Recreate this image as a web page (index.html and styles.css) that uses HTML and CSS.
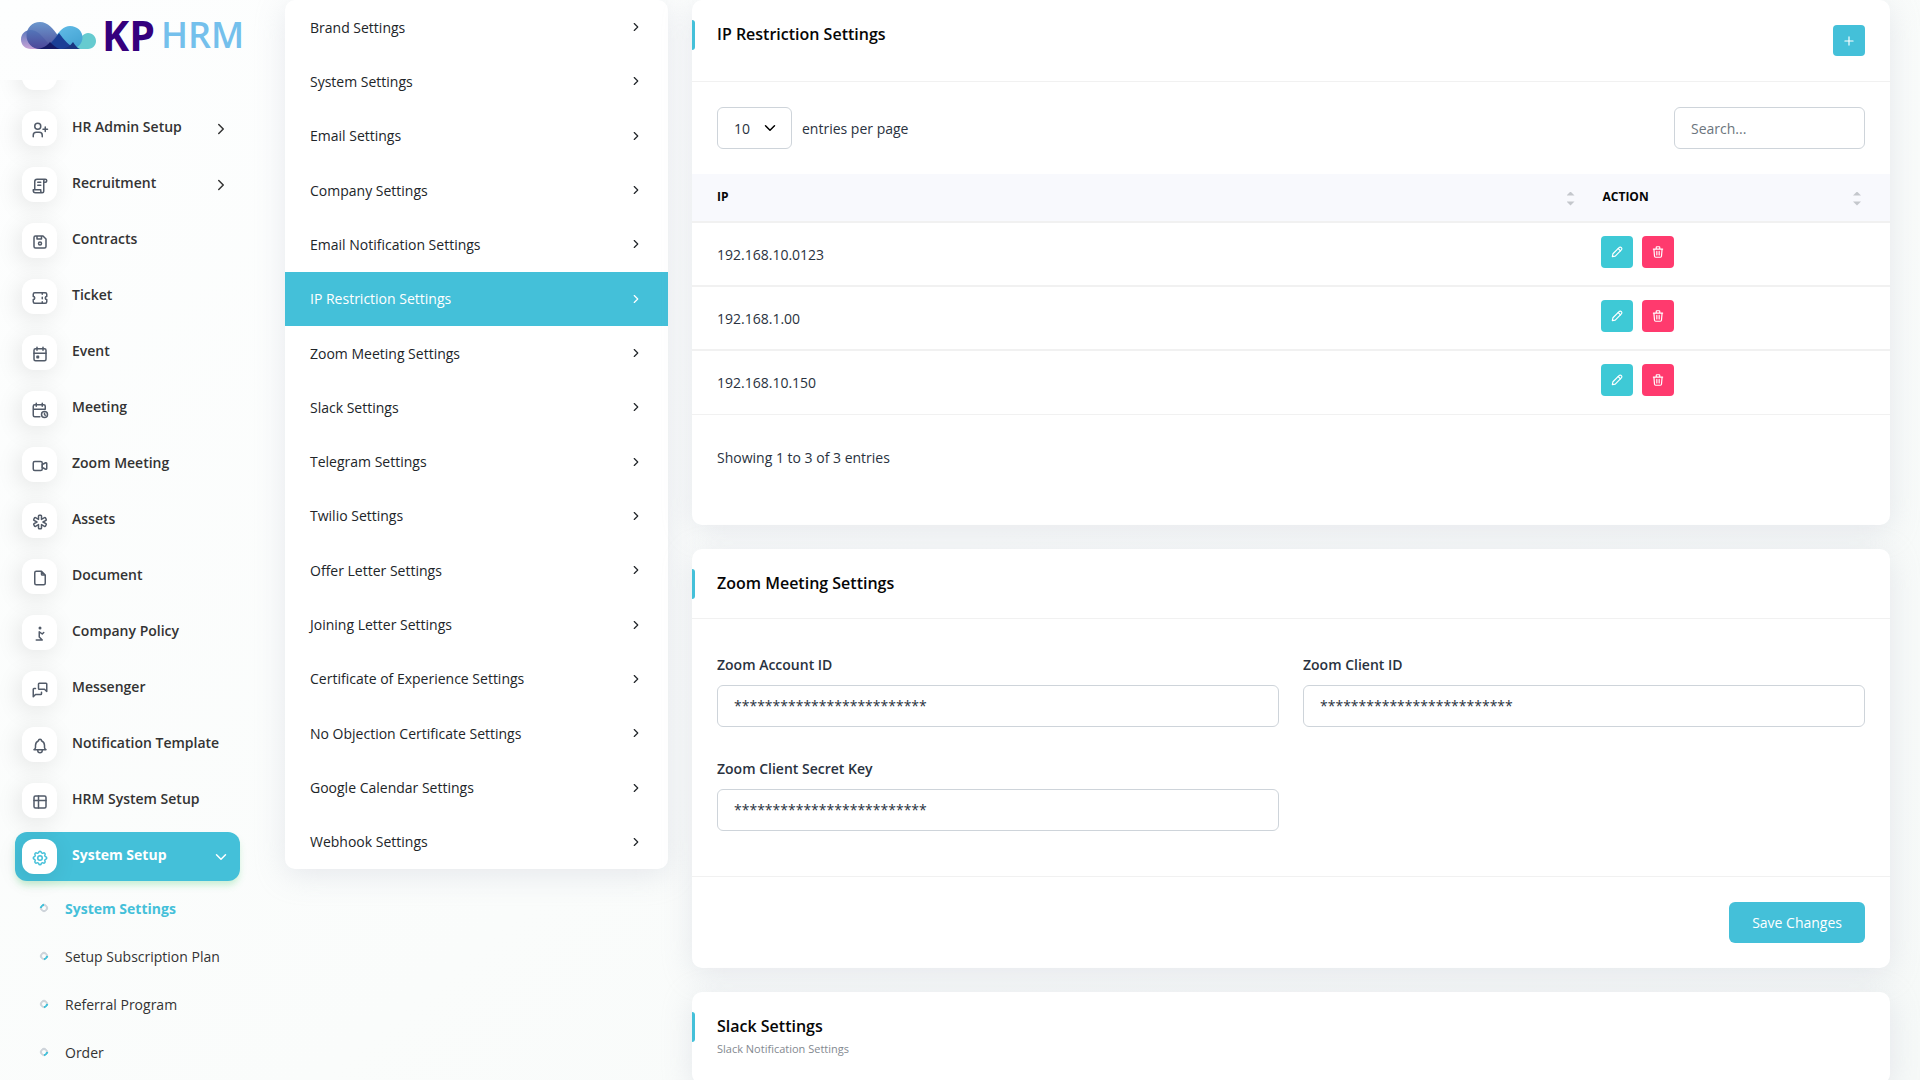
FILE: index.html
```html
<!DOCTYPE html>
<html lang="en">
<head>
    <meta charset="UTF-8">
    <meta name="viewport" content="width=device-width, initial-scale=1.0">
    <title>KP HRM - System Settings</title>
    <link rel="stylesheet" href="styles.css">
</head>
<body>

<!-- shared icons -->
<svg class="sprite" aria-hidden="true">
    <symbol id="i-right" viewBox="0 0 24 24"><path d="M9 6l6 6l-6 6"/></symbol>
    <symbol id="i-down" viewBox="0 0 24 24"><path d="M6 9l6 6l6 -6"/></symbol>
    <symbol id="i-pencil" viewBox="0 0 24 24"><path d="M4 20l1 -5l10.500 -10.500a2.800 2.800 0 0 1 4 4l-10.500 10.500z"/><path d="M14 6l4 4"/></symbol>
    <symbol id="i-trash" viewBox="0 0 24 24"><path d="M4 7h16M10 11v6M14 11v6M5 7l1 12a2 2 0 0 0 2 2h8a2 2 0 0 0 2 -2l1 -12M9 7v-3a1 1 0 0 1 1 -1h4a1 1 0 0 1 1 1v3"/></symbol>
</svg>

<div class="layout">
    <aside class="sidebar">
        <a href="#" class="logo">
            <svg class="logo-mark" viewBox="0 0 75 27" aria-hidden="true">
                <defs>
                    <linearGradient id="g1" x1="0" y1="0" x2="0" y2="1"><stop offset="0" stop-color="#5b8cc8"/><stop offset="1" stop-color="#3f3d92"/></linearGradient>
                    <linearGradient id="g2" x1="0" y1="0" x2="1" y2="1"><stop offset="0" stop-color="#6cc4ee"/><stop offset="1" stop-color="#3f9fcf"/></linearGradient>
                    <linearGradient id="g3" x1="0" y1="0" x2="0" y2="1"><stop offset="0" stop-color="#5a78bd"/><stop offset="1" stop-color="#c9a3d6"/></linearGradient>
                </defs>
                <path fill="url(#g3)" d="M10 8c-6 0-10 4-10 9.500s4 9.500 10 9.500h24c-8-4-14-19-24-19z"/>
                <path fill="#66cbd0" d="M67 11c-8 0-12 16-22 16h22c5 0 8-4 8-8s-3-8-8-8z"/>
                <path fill="url(#g2)" d="M49 4c-13 0-17 23-32 23h32c7 0 12.500-5 12.500-11.500S56 4 49 4z"/>
                <path fill="url(#g1)" fill-opacity=".9" d="M19 0c-8 0-13.500 6-13.500 13.500S11 27 19 27h36c-16 0-20-27-36-27z"/>
                <path fill="#1b3f96" d="M38 11c-5 7-9 13-18 16h36c-8-3-13-9-18-16z"/>
                <path fill="#141a66" d="M29 20c-3 4-8 7-14 7h24c-4-1-7-4-10-7z"/>
                <path fill="#1a3580" d="M52 20c-3 4-6 6-11 7h18c-3-1-5-4-7-7z"/>
            </svg>
            <span class="logo-kp">KP</span>
            <span class="logo-hrm">HRM</span>
        </a>
        <nav class="nav">
            <ul class="nav-list">
                <li><a href="#" class="nav-link" aria-label="Payroll"><span class="nav-icon"></span></a></li>
                <li><a href="#" class="nav-link">
                    <span class="nav-icon"><svg class="icon" viewBox="0 0 24 24"><circle cx="9" cy="7" r="4"/><path d="M3 21v-2a4 4 0 0 1 4 -4h4a4 4 0 0 1 4 4v2M16 11h6m-3 -3v6"/></svg></span>
                    <span class="nav-text">HR Admin Setup</span>
                    <svg class="icon nav-arrow"><use href="#i-right"/></svg>
                </a></li>
                <li><a href="#" class="nav-link">
                    <span class="nav-icon"><svg class="icon" viewBox="0 0 24 24"><path d="M15 21h-9a3 3 0 0 1 -3 -3v-1h10v2a2 2 0 0 0 4 0v-14a2 2 0 1 1 2 2h-2m2 -4h-11a3 3 0 0 0 -3 3v11M9 7h4M9 11h4"/></svg></span>
                    <span class="nav-text">Recruitment</span>
                    <svg class="icon nav-arrow"><use href="#i-right"/></svg>
                </a></li>
                <li><a href="#" class="nav-link">
                    <span class="nav-icon"><svg class="icon" viewBox="0 0 24 24"><path d="M6 4h10l4 4v10a2 2 0 0 1 -2 2h-12a2 2 0 0 1 -2 -2v-12a2 2 0 0 1 2 -2M14 4v4h-6v-4"/><circle cx="12" cy="14" r="2"/></svg></span>
                    <span class="nav-text">Contracts</span>
                </a></li>
                <li><a href="#" class="nav-link">
                    <span class="nav-icon"><svg class="icon" viewBox="0 0 24 24"><path d="M15 5v2M15 11v2M15 17v2M5 5h14a2 2 0 0 1 2 2v3a2 2 0 0 0 0 4v3a2 2 0 0 1 -2 2h-14a2 2 0 0 1 -2 -2v-3a2 2 0 0 0 0 -4v-3a2 2 0 0 1 2 -2"/></svg></span>
                    <span class="nav-text">Ticket</span>
                </a></li>
                <li><a href="#" class="nav-link">
                    <span class="nav-icon"><svg class="icon" viewBox="0 0 24 24"><rect x="4" y="5" width="16" height="16" rx="2"/><path d="M16 3v4M8 3v4M4 11h16M8 15h2v2h-2z"/></svg></span>
                    <span class="nav-text">Event</span>
                </a></li>
                <li><a href="#" class="nav-link">
                    <span class="nav-icon"><svg class="icon" viewBox="0 0 24 24"><path d="M11.795 21h-6.795a2 2 0 0 1 -2 -2v-12a2 2 0 0 1 2 -2h12a2 2 0 0 1 2 2v4M15 3v4M7 3v4M3 11h16M18 16.496v1.504l1 1"/><circle cx="18" cy="18" r="4"/></svg></span>
                    <span class="nav-text">Meeting</span>
                </a></li>
                <li><a href="#" class="nav-link">
                    <span class="nav-icon"><svg class="icon" viewBox="0 0 24 24"><path d="M15 10l4.553 -2.276a1 1 0 0 1 1.447 .894v6.764a1 1 0 0 1 -1.447 .894l-4.553 -2.276v-4z"/><rect x="3" y="6" width="12" height="12" rx="2"/></svg></span>
                    <span class="nav-text">Zoom Meeting</span>
                </a></li>
                <li><a href="#" class="nav-link">
                    <span class="nav-icon"><svg class="icon" viewBox="0 0 24 24"><path d="M13 3a1 1 0 0 1 1 1v4.535l3.928 -2.267a1 1 0 0 1 1.366 .366l1 1.732a1 1 0 0 1 -.366 1.366l-3.927 2.268l3.927 2.269a1 1 0 0 1 .366 1.366l-1 1.732a1 1 0 0 1 -1.366 .366l-3.928 -2.269v4.536a1 1 0 0 1 -1 1h-2a1 1 0 0 1 -1 -1v-4.536l-3.928 2.268a1 1 0 0 1 -1.366 -.366l-1 -1.732a1 1 0 0 1 .366 -1.366l3.927 -2.267l-3.927 -2.268a1 1 0 0 1 -.366 -1.366l1 -1.732a1 1 0 0 1 1.366 -.366l3.928 2.267v-4.535a1 1 0 0 1 1 -1h2z"/></svg></span>
                    <span class="nav-text">Assets</span>
                </a></li>
                <li><a href="#" class="nav-link">
                    <span class="nav-icon"><svg class="icon" viewBox="0 0 24 24"><path d="M14 3v4a1 1 0 0 0 1 1h4M17 21h-10a2 2 0 0 1 -2 -2v-14a2 2 0 0 1 2 -2h7l5 5v11a2 2 0 0 1 -2 2z"/></svg></span>
                    <span class="nav-text">Document</span>
                </a></li>
                <li><a href="#" class="nav-link">
                    <span class="nav-icon"><svg class="icon" viewBox="0 0 24 24"><circle cx="12" cy="4" r="1"/><path d="M7 20h8l-4 -4v-7l4 3l2 -2"/></svg></span>
                    <span class="nav-text">Company Policy</span>
                </a></li>
                <li><a href="#" class="nav-link">
                    <span class="nav-icon"><svg class="icon" viewBox="0 0 24 24"><path d="M21 14l-3 -3h-7a1 1 0 0 1 -1 -1v-6a1 1 0 0 1 1 -1h9a1 1 0 0 1 1 1v10M14 15v2a1 1 0 0 1 -1 1h-7l-3 3v-10a1 1 0 0 1 1 -1h2"/></svg></span>
                    <span class="nav-text">Messenger</span>
                </a></li>
                <li><a href="#" class="nav-link">
                    <span class="nav-icon"><svg class="icon" viewBox="0 0 24 24"><path d="M10 5a2 2 0 0 1 4 0a7 7 0 0 1 4 6v3a4 4 0 0 0 2 3h-16a4 4 0 0 0 2 -3v-3a7 7 0 0 1 4 -6M9 17v1a3 3 0 0 0 6 0v-1"/></svg></span>
                    <span class="nav-text">Notification Template</span>
                </a></li>
                <li><a href="#" class="nav-link">
                    <span class="nav-icon"><svg class="icon" viewBox="0 0 24 24"><rect x="4" y="4" width="16" height="16" rx="2"/><path d="M4 10h16M10 4v16"/></svg></span>
                    <span class="nav-text">HRM System Setup</span>
                </a></li>
                <li>
                    <a href="#" class="nav-link active">
                        <span class="nav-icon"><svg class="icon" viewBox="0 0 24 24"><path d="M10.325 4.317c.426 -1.756 2.924 -1.756 3.350 0a1.724 1.724 0 0 0 2.573 1.066c1.543 -.94 3.310 .826 2.370 2.370a1.724 1.724 0 0 0 1.065 2.572c1.756 .426 1.756 2.924 0 3.350a1.724 1.724 0 0 0 -1.066 2.573c.94 1.543 -.826 3.310 -2.370 2.370a1.724 1.724 0 0 0 -2.572 1.065c-.426 1.756 -2.924 1.756 -3.350 0a1.724 1.724 0 0 0 -2.573 -1.066c-1.543 .94 -3.310 -.826 -2.370 -2.370a1.724 1.724 0 0 0 -1.065 -2.572c-1.756 -.426 -1.756 -2.924 0 -3.350a1.724 1.724 0 0 0 1.066 -2.573c-.94 -1.543 .826 -3.310 2.370 -2.370c1 .608 2.296 .070 2.572 -1.065z"/><circle cx="12" cy="12" r="3"/></svg></span>
                        <span class="nav-text">System Setup</span>
                        <svg class="icon nav-arrow"><use href="#i-down"/></svg>
                    </a>
                    <ul class="submenu">
                        <li class="active"><a href="#">System Settings</a></li>
                        <li><a href="#">Setup Subscription Plan</a></li>
                        <li><a href="#">Referral Program</a></li>
                        <li><a href="#">Order</a></li>
                    </ul>
                </li>
            </ul>
        </nav>
    </aside>

    <main class="main">
        <nav class="settings-nav">
            <a href="#">Brand Settings<svg class="icon"><use href="#i-right"/></svg></a>
            <a href="#">System Settings<svg class="icon"><use href="#i-right"/></svg></a>
            <a href="#">Email Settings<svg class="icon"><use href="#i-right"/></svg></a>
            <a href="#">Company Settings<svg class="icon"><use href="#i-right"/></svg></a>
            <a href="#">Email Notification Settings<svg class="icon"><use href="#i-right"/></svg></a>
            <a href="#" class="active">IP Restriction Settings<svg class="icon"><use href="#i-right"/></svg></a>
            <a href="#">Zoom Meeting Settings<svg class="icon"><use href="#i-right"/></svg></a>
            <a href="#">Slack Settings<svg class="icon"><use href="#i-right"/></svg></a>
            <a href="#">Telegram Settings<svg class="icon"><use href="#i-right"/></svg></a>
            <a href="#">Twilio Settings<svg class="icon"><use href="#i-right"/></svg></a>
            <a href="#">Offer Letter Settings<svg class="icon"><use href="#i-right"/></svg></a>
            <a href="#">Joining Letter Settings<svg class="icon"><use href="#i-right"/></svg></a>
            <a href="#">Certificate of Experience Settings<svg class="icon"><use href="#i-right"/></svg></a>
            <a href="#">No Objection Certificate Settings<svg class="icon"><use href="#i-right"/></svg></a>
            <a href="#">Google Calendar Settings<svg class="icon"><use href="#i-right"/></svg></a>
            <a href="#">Webhook Settings<svg class="icon"><use href="#i-right"/></svg></a>
        </nav>

        <div class="cards">
            <section class="card">
                <div class="card-header">
                    <h2>IP Restriction Settings</h2>
                    <button type="button" class="btn-icon btn-primary" aria-label="Create"><svg class="icon" viewBox="0 0 24 24"><path d="M12 5v14M5 12h14"/></svg></button>
                </div>
                <div class="table-top">
                    <div class="entries">
                        <select id="entries">
                            <option>5</option>
                            <option selected>10</option>
                            <option>15</option>
                        </select>
                        <label for="entries">entries per page</label>
                    </div>
                    <input type="search" class="search" placeholder="Search..." aria-label="Search">
                </div>
                <table class="ip-table">
                    <thead>
                        <tr>
                            <th><button type="button" class="sorter">IP</button></th>
                            <th><button type="button" class="sorter">ACTION</button></th>
                        </tr>
                    </thead>
                    <tbody>
                        <tr>
                            <td>192.168.10.0123</td>
                            <td><div class="actions">
                                <button type="button" class="btn-icon btn-info" aria-label="Edit"><svg class="icon"><use href="#i-pencil"/></svg></button>
                                <button type="button" class="btn-icon btn-danger" aria-label="Delete"><svg class="icon"><use href="#i-trash"/></svg></button>
                            </div></td>
                        </tr>
                        <tr>
                            <td>192.168.1.00</td>
                            <td><div class="actions">
                                <button type="button" class="btn-icon btn-info" aria-label="Edit"><svg class="icon"><use href="#i-pencil"/></svg></button>
                                <button type="button" class="btn-icon btn-danger" aria-label="Delete"><svg class="icon"><use href="#i-trash"/></svg></button>
                            </div></td>
                        </tr>
                        <tr>
                            <td>192.168.10.150</td>
                            <td><div class="actions">
                                <button type="button" class="btn-icon btn-info" aria-label="Edit"><svg class="icon"><use href="#i-pencil"/></svg></button>
                                <button type="button" class="btn-icon btn-danger" aria-label="Delete"><svg class="icon"><use href="#i-trash"/></svg></button>
                            </div></td>
                        </tr>
                    </tbody>
                </table>
                <p class="table-info">Showing 1 to 3 of 3 entries</p>
            </section>

            <section class="card">
                <div class="card-header">
                    <h2>Zoom Meeting Settings</h2>
                </div>
                <form action="#" method="post">
                    <div class="form-body">
                        <div class="form-group">
                            <label for="zoom-account">Zoom Account ID</label>
                            <input type="text" id="zoom-account" value="*************************">
                        </div>
                        <div class="form-group">
                            <label for="zoom-client">Zoom Client ID</label>
                            <input type="text" id="zoom-client" value="*************************">
                        </div>
                        <div class="form-group">
                            <label for="zoom-secret">Zoom Client Secret Key</label>
                            <input type="text" id="zoom-secret" value="*************************">
                        </div>
                    </div>
                    <div class="card-footer">
                        <button type="submit" class="btn-save btn-primary">Save Changes</button>
                    </div>
                </form>
            </section>

            <section class="card">
                <div class="card-header">
                    <div>
                        <h2>Slack Settings</h2>
                        <small>Slack Notification Settings</small>
                    </div>
                </div>
            </section>
        </div>
    </main>
</div>

</body>
</html>
```

FILE: styles.css
```css
*,
*::before,
*::after {
    box-sizing: border-box;
}
body {
    margin: 0;
    font-family: "Open Sans", "Noto Sans", sans-serif;
    font-size: 14px;
    line-height: 21px;
    color: #293240;
    background: linear-gradient(140deg, #fdfefe 0%, #fafcfb 50%, #f6f9f8 100%);
}
a {
    color: inherit;
    text-decoration: none;
}
ul {
    list-style: none;
    margin: 0;
    padding: 0;
}
button, input, select {
    font: inherit;
    color: inherit;
}
button {
    border: none;
    cursor: pointer;
}
.sprite {
    display: none;
}
.icon {
    width: 18px;
    height: 18px;
    fill: none;
    stroke: currentColor;
    stroke-width: 2;
    stroke-linecap: round;
    stroke-linejoin: round;
    flex-shrink: 0;
}
.layout {
    display: flex;
    height: 100vh;
    overflow: hidden;
}

/* sidebar */
.sidebar {
    display: flex;
    flex-direction: column;
    flex: 0 0 285px;
    height: 100%;
}
.logo {
    display: flex;
    align-items: flex-end;
    height: 80px;
    padding: 0 0 31px 21px;
    line-height: 28px;
}
.logo-mark {
    width: 75px;
    height: 27px;
}
.logo-kp {
    margin-left: 6px;
    font-size: 41px;
    font-weight: 700;
    color: #35007d;
}
.logo-hrm {
    margin-left: 6px;
    font-size: 36px;
    font-weight: 600;
    color: #74c0ec;
}
.nav {
    flex: 1;
    overflow: hidden;
}
.nav-list {
    margin-top: -32px;
    padding: 0 45px 0 15px;
}
.nav-link {
    display: flex;
    align-items: center;
    height: 49px;
    margin-bottom: 7px;
    padding: 0 10px 0 7px;
    border-radius: 12px;
    font-weight: 600;
    color: #333;
}
.nav-icon {
    display: flex;
    align-items: center;
    justify-content: center;
    width: 35px;
    height: 35px;
    padding-top: 2px;
    margin-right: 15px;
    border-radius: 12px;
    background: #fff;
    color: #525b69;
    box-shadow: -3px 4px 23px rgba(0, 0, 0, 0.1);
}
.nav-text {
    flex: 1;
    padding-bottom: 5px;
}
.nav-link.active {
    background: #44c0d9;
    color: #fff;
    font-weight: 700;
    box-shadow: 0 5px 7px -1px rgba(81, 210, 120, 0.3);
}
.nav-link.active .nav-icon {
    color: #44c0d9;
}
.submenu {
    margin-top: -4px;
}
.submenu a {
    display: flex;
    align-items: center;
    height: 48px;
    padding-left: 25px;
    color: #333;
}
.submenu a::before {
    content: "";
    width: 8px;
    height: 8px;
    margin-right: 17px;
    border: 2px solid #ced4da;
    border-right-color: #44c0d9;
    border-radius: 50%;
    transform: rotate(45deg);
}
.submenu .active a {
    color: #44c0d9;
    font-weight: 700;
}
.submenu .active a::before {
    transform: rotate(-135deg);
}

/* page content */
.main {
    flex: 1;
    display: flex;
    align-items: flex-start;
    gap: 24px;
    min-width: 0;
    padding-right: 30px;
}
.settings-nav {
    flex: 0 0 383px;
    display: grid;
    grid-auto-rows: 1fr;
    min-height: 869px;
    border-radius: 10px;
    background: #fff;
    box-shadow: 0 6px 30px rgba(182, 186, 203, 0.3);
}
.settings-nav a {
    display: flex;
    align-items: center;
    justify-content: space-between;
    padding: 0 25px;
    color: #212529;
}
.settings-nav a.active {
    background: #44c0d9;
    color: #fff;
}
.settings-nav .icon {
    width: 14px;
    height: 14px;
}
.cards {
    flex: 1;
    min-width: 0;
}
.card {
    margin-bottom: 24px;
    border-radius: 10px;
    background: #fff;
    box-shadow: 0 6px 30px rgba(182, 186, 203, 0.3);
}
.card-header {
    position: relative;
    display: flex;
    align-items: flex-start;
    justify-content: space-between;
    padding: 25px;
    border-bottom: 1px solid #f1f1f1;
}
.card-header::before {
    content: "";
    position: absolute;
    left: 0;
    top: 20px;
    width: 3px;
    height: 30px;
    border-radius: 0 3px 3px 0;
    background: #44c0d9;
}
.card-header h2 {
    margin: 0;
    font-size: 16px;
    font-weight: 600;
    line-height: 19px;
    color: #060606;
}
.card-header small {
    display: block;
    margin-top: 4px;
    font-size: 11px;
    line-height: 18px;
    color: #838990;
}
.btn-primary {
    background: #44c0d9;
    color: #fff;
}
.btn-info {
    background: #3ec9d6;
    color: #fff;
}
.btn-danger {
    background: #ff3a6e;
    color: #fff;
}
.btn-icon {
    display: flex;
    align-items: center;
    justify-content: center;
    width: 32px;
    height: 32px;
    padding: 0;
    border-radius: 4px;
}
.btn-icon .icon {
    width: 14px;
    height: 14px;
}
.card-header .btn-icon {
    height: 31px;
}

/* ip table */
.table-top {
    display: flex;
    justify-content: space-between;
    padding: 25px;
}
.entries {
    display: flex;
    align-items: center;
    gap: 10px;
}
.entries select,
.search,
.form-group input {
    height: 42px;
    padding: 0 16px;
    border: 1px solid #ced4da;
    border-radius: 6px;
    background: #fff;
    outline: none;
}
.entries select {
    width: 75px;
    appearance: none;
    background: #fff url("data:image/svg+xml,%3Csvg xmlns='http://www.w3.org/2000/svg' viewBox='0 0 16 16'%3E%3Cpath fill='none' stroke='%23000' stroke-linecap='round' stroke-linejoin='round' stroke-width='2' d='M2 5l6 6 6-6'/%3E%3C/svg%3E") no-repeat right 15px center / 12px 12px;
}
.search {
    width: 191px;
}
.search::placeholder {
    color: #6c757d;
}
.ip-table {
    width: 100%;
    table-layout: fixed;
    border-collapse: separate;
    border-spacing: 0;
}
.ip-table th,
.ip-table td {
    height: 64px;
    padding: 0 16px 0 25px;
    border-bottom: 2px solid #f1f1f1;
}
.ip-table th {
    height: 49px;
    background: #f8f9fd;
}
.ip-table tbody tr:last-child td {
    border-bottom-width: 1px;
}
.ip-table th:last-child {
    width: 25%;
    padding: 0 29px 0 12px;
}
.ip-table td:last-child {
    padding-left: 10px;
}
.sorter {
    display: flex;
    align-items: center;
    justify-content: space-between;
    width: 100%;
    padding: 0 0 2px;
    background: none;
    font-size: 12px;
    font-weight: 700;
    color: #060606;
}
.sorter::after {
    content: "";
    width: 8px;
    height: 14px;
    margin-top: 4px;
    background: #c4c7cc;
    clip-path: polygon(50% 0, 100% 4px, 0 4px, 0 10px, 100% 10px, 50% 100%, 0 10px, 0 4px);
}
.actions {
    display: flex;
    gap: 9px;
    padding-bottom: 5px;
}
.table-info {
    margin: 0;
    padding: 32px 25px 57px;
}

/* forms */
.form-body {
    display: grid;
    grid-template-columns: 1fr 1fr;
    gap: 31px 24px;
    padding: 35px 25px 45px;
}
.form-group label {
    display: block;
    margin-bottom: 10px;
    font-weight: 600;
}
.form-group input {
    width: 100%;
    padding-bottom: 2px;
}
.card-footer {
    display: flex;
    justify-content: flex-end;
    padding: 25px;
    border-top: 1px solid #f1f1f1;
}
.btn-save {
    height: 41px;
    padding: 0 23px;
    border-radius: 6px;
}
```
